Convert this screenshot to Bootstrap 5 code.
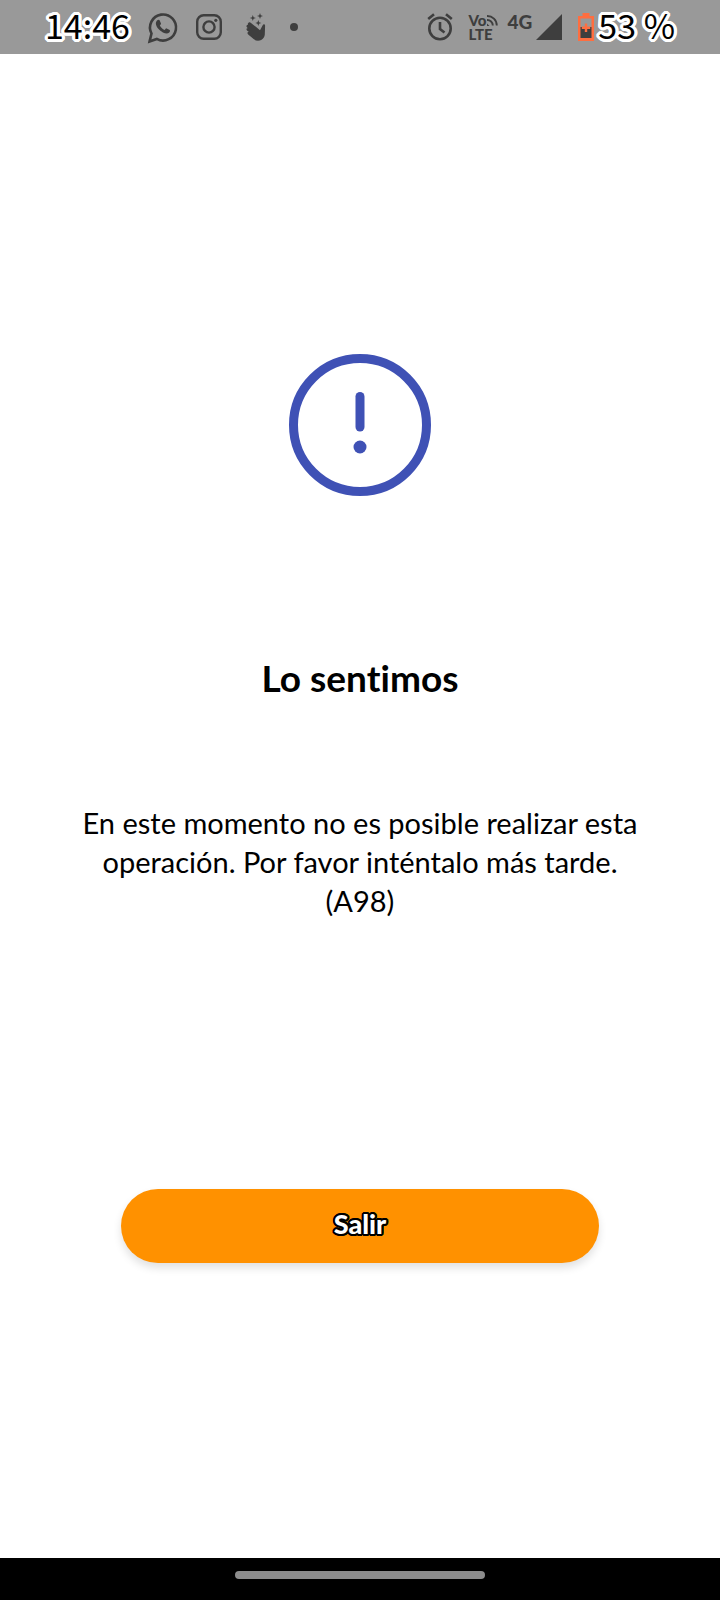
<!DOCTYPE html>
<html lang="es">
<head>
<meta charset="utf-8">
<meta name="viewport" content="width=device-width, initial-scale=1">
<title>Lo sentimos</title>
<link rel="stylesheet" href="https://cdn.jsdelivr.net/npm/bootstrap@5.3.0/dist/css/bootstrap.min.css">
<style>
  body { font-family: Lato, sans-serif; color: #000; background: #fff; font-variant-ligatures: none; }
  .status-bar { background: #999; color: #3e3e3e; height: 54px; padding: 0 45px; }
  .status-bar svg { display: block; flex: none; }
  .status-text { font-family: "Noto Sans CJK SC", sans-serif; font-size: 34px; line-height: 50px; padding-bottom: 4px; color: #000; white-space: nowrap;
    text-shadow: 3px 0 #fff, -3px 0 #fff, 0 3px #fff, 0 -3px #fff, 2px 2px #fff, -2px 2px #fff, 2px -2px #fff, -2px -2px #fff,
      3px 1px #fff, 3px -1px #fff, -3px 1px #fff, -3px -1px #fff, 1px 3px #fff, -1px 3px #fff, 1px -3px #fff, -1px -3px #fff; }
  .net-label { font-weight: 900; font-size: 15px; line-height: 14px; width: 31px; }
  .net-type { font-weight: 900; font-size: 19px; line-height: 20px; }
  .message-pane { padding: 299px 80px 40px; }
  .message-title { font-size: 37px; font-weight: 700; line-height: 44px; margin: 159px 0 103px; }
  .message-text { font-size: 29px; line-height: 39px; margin: 0 0 269px; }
  .exit-btn, .exit-btn:hover { background: #ff9100; color: #fff; width: 100%; max-width: 478px; height: 74px; border: 0; padding: 0 0 4px;
    border-radius: 37px; font-size: 27px; font-weight: 900; line-height: 30px; box-shadow: 0 5px 8px rgba(0, 0, 0, .12);
    text-shadow: 2px 0 #000, -2px 0 #000, 0 2px #000, 0 -2px #000, 2px 1px #000, -2px 1px #000, 2px -1px #000, -2px -1px #000,
      1px 2px #000, -1px 2px #000, 1px -2px #000, -1px -2px #000; }
  .nav-strip { background: #000; height: 42px; padding-bottom: 8px; }
  .home-pill { background: #8c8c8c; width: 250px; height: 8px; border-radius: 4px; }
</style>
</head>
<body>
<div class="d-flex flex-column min-vh-100">
  <header class="status-bar d-flex align-items-center justify-content-between">
    <div class="d-flex align-items-center gap-3">
      <span class="status-text">14:46</span>
      <svg width="34" height="34" viewBox="0 0 34 34" fill="none" stroke="currentColor" role="img" aria-label="WhatsApp">
        <path d="M3.600 31.400 5.500 23.500A13 13 0 1 1 10.800 28.900Z" stroke-width="2.600"/>
        <path d="M11.300 10.300c.6-.7 1.900-.8 2.300 0l1.400 3.100c.2.600-.9 1.600-1.200 2.100.9 1.900 2.600 3.500 4.900 4.500.6-.6 1.300-1.900 2-1.600l3 1.500c.6.400.2 1.900-.5 2.600-1.500 1.400-3.700 1.200-6.300-.1-3.400-1.700-6.500-5-7-8.300-.2-1.400.4-2.900 1.400-3.800z" fill="currentColor" stroke="none"/>
      </svg>
      <svg width="26" height="26" viewBox="0 0 26 26" fill="none" stroke="currentColor" stroke-width="2.400" role="img" aria-label="Instagram">
        <rect x="1.200" y="1.200" width="23.600" height="23.600" rx="6.500"/>
        <circle cx="13" cy="13" r="5.600"/><circle cx="19.800" cy="6.300" r="1.600" fill="currentColor" stroke="none"/>
      </svg>
      <svg class="ms-2" width="20" height="28" viewBox="0 0 20 28" fill="currentColor" role="img" aria-label="Saludo">
        <path d="M2.500 9.800c.8-.8 1.800-.5 2.500.1l9 7.400 2.700-5.100c.8-1.400 2.400-1 2.400.6l-.3 8.800c-.2 2.400-1.600 4.400-3.600 5.400-2.500 1.300-5.400 1-7.600-.9L2.200 21.500c-1.400-1.300-.6-2.700.7-2.400L1 17.500c-1.200-1.300-.2-2.500 1-2.100L.9 14.300c-1.100-1.300 0-2.500 1.300-2.100-.9-.8-.5-1.800.3-2.400z"/>
        <path d="M6.800 2 7.600 4.200 9.800 5 7.600 5.800 6.800 8 6 5.800 3.800 5 6 4.200ZM14 0l.8 2.200 2.200.8-2.200.8-.8 2.200-.8-2.200-2.200-.8 2.200-.8ZM12.300 7l.8 2.200 2.200.8-2.200.8-.8 2.200-.8-2.200-2.200-.8 2.200-.8Z"/>
      </svg>
      <svg class="ms-2" width="8" height="8" viewBox="0 0 8 8" fill="currentColor" aria-hidden="true"><circle cx="4" cy="4" r="4"/></svg>
    </div>
    <div class="d-flex align-items-center">
      <svg class="me-3" width="26" height="28" viewBox="0 0 26 28" fill="none" stroke="currentColor" stroke-width="2.600" role="img" aria-label="Alarma">
        <circle cx="13" cy="15.500" r="10.700"/><path d="M13 9v7l4.500 3.500M1.200 6 7 1.200M24.800 6 19 1.200"/>
      </svg>
      <div class="net-label d-flex flex-column me-2">
        <span class="d-flex align-items-center">Vo
          <svg width="11" height="11" viewBox="0 0 11 11" fill="none" stroke="currentColor" stroke-width="1.900" aria-hidden="true">
            <path d="M0 1A9.500 9.500 0 0 1 9.800 10.500M0 5A5.500 5.500 0 0 1 5.800 10.500"/><path d="M0 8.500 2.500 11H0z" fill="currentColor" stroke="none"/>
          </svg></span>
        <span>LTE</span>
      </div>
      <span class="net-type align-self-start mt-2 pt-1 me-1">4G</span>
      <svg class="me-3" width="26" height="26" viewBox="0 0 26 26" fill="currentColor" role="img" aria-label="Señal"><path d="M0 26 26 0V26z"/></svg>
      <svg class="me-1" width="16" height="28" viewBox="0 0 16 28" role="img" aria-label="Batería">
        <path d="M4.500 0H11.500V3H16V28H0V3H4.500z" fill="#ff6e40"/>
        <path d="M2.500 5.500H13.500V14H2.500z" fill="#999"/><path d="M2.500 14H13.500V25H2.500z" fill="#3e3e3e"/>
        <path d="M8 10.500v8.500M3.800 14.800h8.400" stroke="#ff6e40" stroke-width="2.400"/>
      </svg>
      <span class="status-text">53 %</span>
    </div>
  </header>
  <main class="message-pane flex-grow-1 d-flex flex-column align-items-center text-center">
    <svg width="144" height="144" viewBox="0 0 144 144" fill="none" stroke="#3f51b5" stroke-width="9" stroke-linecap="round" role="img" aria-label="Aviso">
      <circle cx="72" cy="72" r="66.500"/><path d="M72 43.500V74"/><circle cx="72" cy="94" r="6.500" fill="#3f51b5" stroke="none"/>
    </svg>
    <h1 class="message-title">Lo sentimos</h1>
    <p class="message-text">En este momento no es posible realizar esta operación. Por favor inténtalo más tarde. (A98)</p>
    <button type="button" class="btn exit-btn">Salir</button>
  </main>
  <footer class="nav-strip d-flex align-items-center justify-content-center"><div class="home-pill"></div></footer>
</div>
<script src="https://cdn.jsdelivr.net/npm/bootstrap@5.3.0/dist/js/bootstrap.bundle.min.js"></script>
</body>
</html>
